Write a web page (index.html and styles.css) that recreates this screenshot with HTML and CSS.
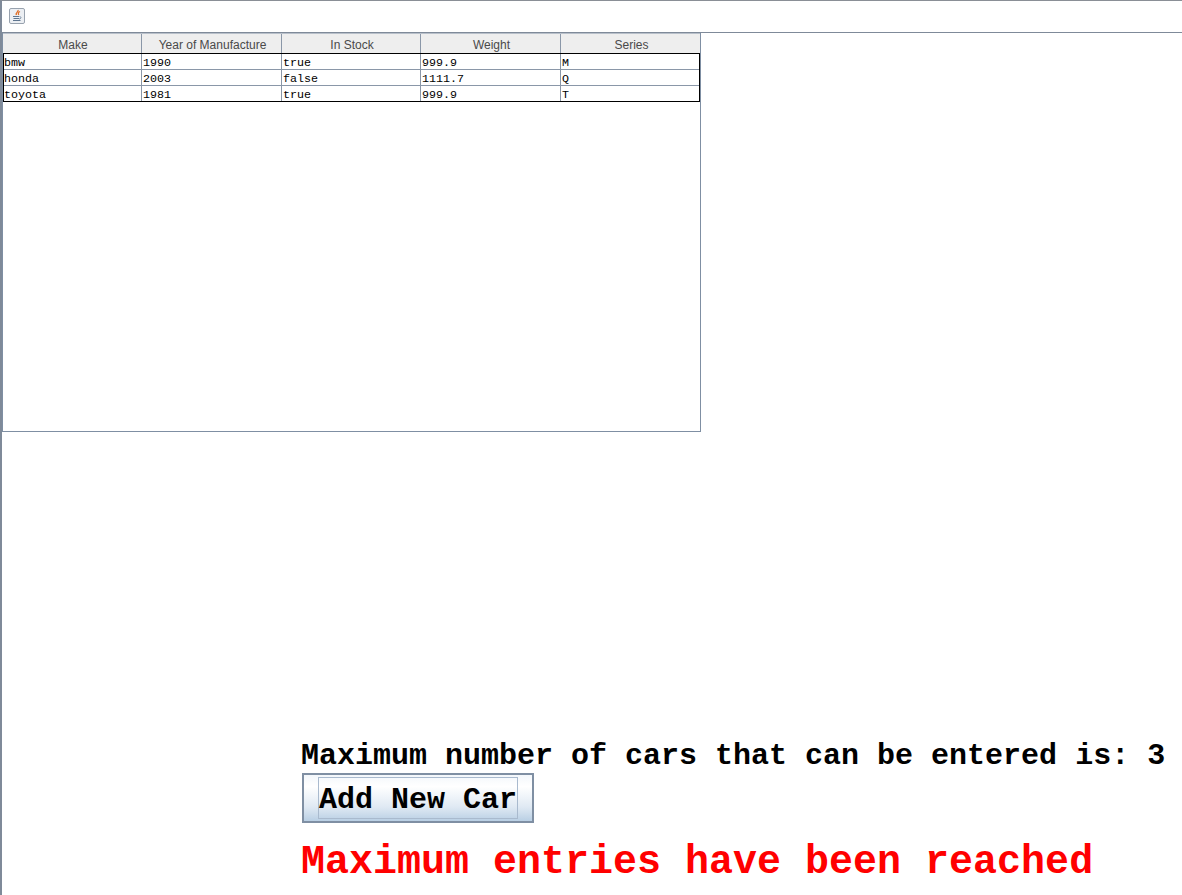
FILE: index.html
```html
<!DOCTYPE html>
<html lang="en">
<head>
    <meta charset="UTF-8">
    <title>Cars</title>
    <link rel="stylesheet" href="styles.css">
</head>
<body>
    <div class="window">
        <div class="titlebar">
            <svg class="java-icon" width="16" height="16" viewBox="0 0 16 16">
                <rect x="0.5" y="0.5" width="15" height="15" rx="1.5" fill="#eceff3" stroke="#98a2ae"/>
                <path d="M9 2c1 1.500-3 2.500-1.500 5M11 3.500c-2 .8-2 2-1.200 3.500" fill="none" stroke="#e0702a" stroke-width="1.300"/>
                <path d="M4 8.500h6M4.500 10.500h5.500M4 12.500h7.500" fill="none" stroke="#5f7690" stroke-width="1.100"/>
                <path d="M10.500 8.500c2 0 2 2.500-.5 2.500" fill="none" stroke="#5f7690" stroke-width="0.800"/>
            </svg>
        </div>

        <div class="table-panel">
            <div class="row head">
                <div>Make</div>
                <div>Year of Manufacture</div>
                <div>In Stock</div>
                <div>Weight</div>
                <div>Series</div>
            </div>
            <div class="rows">
                <div class="row">
                    <div>bmw</div><div>1990</div><div>true</div><div>999.9</div><div>M</div>
                </div>
                <div class="row">
                    <div>honda</div><div>2003</div><div>false</div><div>1111.7</div><div>Q</div>
                </div>
                <div class="row">
                    <div>toyota</div><div>1981</div><div>true</div><div>999.9</div><div>T</div>
                </div>
            </div>
        </div>

        <div class="controls">
            <div class="max-label">Maximum number of cars that can be entered is: 3</div>
            <button class="add-btn" type="button"><span>Add New Car</span></button>
            <div class="max-error">Maximum entries have been reached</div>
        </div>
    </div>
</body>
</html>
```

FILE: styles.css
```css
html, body {
    margin: 0;
    padding: 0;
    background-color: #fff;
}
.window {
    box-sizing: border-box;
    height: 895px;
    overflow: hidden;
    border-top: 1px solid #8a8f96;
    border-left: 2px solid #7f8a99;
}
.titlebar {
    box-sizing: border-box;
    height: 32px;
    padding: 7px 0 0 7px;
    border-bottom: 1px solid #7f8a99;
}
.java-icon {
    display: block;
}
.table-panel {
    box-sizing: border-box;
    width: 699px;
    height: 399px;
    border: 1px solid #7f8fa3;
    border-top: 0;
}
.row {
    display: grid;
    grid-template-columns: 139px 140px 139px 140px 1fr;
    box-sizing: border-box;
    height: 16px;
    overflow: hidden;
    font-family: "Liberation Mono", monospace;
    font-size: 11.67px;
    line-height: 18px;
    color: #000;
}
.row > div {
    box-sizing: border-box;
    padding-left: 1px;
    border-right: 1px solid #8a97a8;
    white-space: nowrap;
}
.row > div:last-child {
    border-right: 0;
}
.rows {
    box-sizing: border-box;
    border: 1px solid #000;
    border-top: 0;
}
.rows .row {
    grid-template-columns: 138px 140px 139px 140px 1fr;
    border-bottom: 1px solid #8a97a8;
}
.rows .row > div:first-child {
    padding-left: 0;
}
.rows .row:last-child {
    height: 15px;
    border-bottom: 0;
}
.head {
    height: 21px;
    font-family: "Liberation Sans", sans-serif;
    font-size: 12px;
    line-height: 22px;
    color: #4a4a4a;
    background-color: #eeeeee;
    border-top: 1px solid #b8c0ca;
    border-bottom: 1px solid #000;
}
.head > div {
    padding-left: 2px;
    text-align: center;
}
.controls {
    margin: 307px 0 0 299px;
    font-family: "Liberation Mono", monospace;
    font-weight: bold;
    white-space: nowrap;
}
.max-label {
    font-size: 30px;
    line-height: 34px;
    color: #000;
}
.add-btn {
    display: block;
    box-sizing: border-box;
    width: 232px;
    height: 50px;
    margin: 0 0 0 1px;
    padding: 0;
    border: 2px solid #7f8fa3;
    background: linear-gradient(#f3f7fb 0%, #ffffff 25%, #dfe9f3 70%, #b9cfe4 100%);
    font: inherit;
    font-size: 30px;
    color: #000;
}
.add-btn span {
    display: block;
    box-sizing: border-box;
    width: 200px;
    height: 42px;
    margin-left: 14px;
    border: 1px solid #a9bace;
    line-height: 44px;
    text-align: center;
}
.max-error {
    margin-top: 17px;
    font-size: 40px;
    line-height: 46px;
    color: #f00;
}
```
